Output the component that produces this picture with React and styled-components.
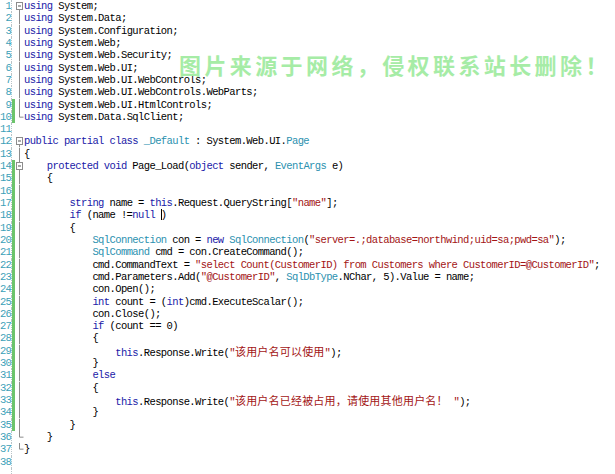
import styled, { createGlobalStyle } from "styled-components";

const GlobalStyle = createGlobalStyle`
  html, body {
    margin: 0;
    padding: 0;
    background: #ffffff;
  }
  body {
    width: 615px;
    height: 474px;
    overflow: hidden;
  }
`;

const K = "k";
const T = "t";
const S = "s";
const C = "c";
const CARET = "caret";

const ind = (n) => " ".repeat(n);

const LINES = [
  { fold: "box", code: [[K, "using"], " System;"] },
  { fold: "line", code: [[K, "using"], " System.Data;"] },
  { fold: "line", code: [[K, "using"], " System.Configuration;"] },
  { fold: "line", code: [[K, "using"], " System.Web;"] },
  { fold: "line", code: [[K, "using"], " System.Web.Security;"] },
  { fold: "line", code: [[K, "using"], " System.Web.UI;"] },
  { fold: "line", code: [[K, "using"], " System.Web.UI.WebControls;"] },
  { fold: "line", code: [[K, "using"], " System.Web.UI.WebControls.WebParts;"] },
  { fold: "line", changed: true, code: [[K, "using"], " System.Web.UI.HtmlControls;"] },
  { fold: "end", changed: true, code: [[K, "using"], " System.Data.SqlClient;"] },
  { fold: "", code: [] },
  {
    fold: "box",
    code: [[K, "public partial class"], " ", [T, "_Default"], " : System.Web.UI.", [T, "Page"]],
  },
  { fold: "line", code: ["{"] },
  {
    fold: "boxmid",
    changed: true,
    code: [ind(4), [K, "protected void"], " Page_Load(", [K, "object"], " sender, ", [T, "EventArgs"], " e)"],
  },
  { fold: "line", changed: true, code: [ind(4) + "{"] },
  { fold: "line", changed: true, code: [] },
  {
    fold: "line",
    changed: true,
    code: [ind(8), [K, "string"], " name = ", [K, "this"], ".Request.QueryString[", [S, '"name"'], "];"],
  },
  { fold: "line", changed: true, code: [ind(8), [K, "if"], " (name !=", [K, "null"], " ", [CARET, ""], ")"] },
  { fold: "line", changed: true, code: [ind(8) + "{"] },
  {
    fold: "line",
    changed: true,
    code: [
      ind(12),
      [T, "SqlConnection"],
      " con = ",
      [K, "new"],
      " ",
      [T, "SqlConnection"],
      "(",
      [S, '"server=.;database=northwind;uid=sa;pwd=sa"'],
      ");",
    ],
  },
  { fold: "line", changed: true, code: [ind(12), [T, "SqlCommand"], " cmd = con.CreateCommand();"] },
  {
    fold: "line",
    changed: true,
    code: [
      ind(12) + "cmd.CommandText = ",
      [S, '"select Count(CustomerID) from Customers where CustomerID=@CustomerID"'],
      ";",
    ],
  },
  {
    fold: "line",
    changed: true,
    code: [
      ind(12) + "cmd.Parameters.Add(",
      [S, '"@CustomerID"'],
      ", ",
      [T, "SqlDbType"],
      ".NChar, 5).Value = name;",
    ],
  },
  { fold: "line", changed: true, code: [ind(12) + "con.Open();"] },
  { fold: "line", changed: true, code: [ind(12), [K, "int"], " count = (", [K, "int"], ")cmd.ExecuteScalar();"] },
  { fold: "line", changed: true, code: [ind(12) + "con.Close();"] },
  { fold: "line", changed: true, code: [ind(12), [K, "if"], " (count == 0)"] },
  { fold: "line", changed: true, code: [ind(12) + "{"] },
  {
    fold: "line",
    changed: true,
    code: [ind(16), [K, "this"], ".Response.Write(", [S, '"'], [C, "该用户名可以使用"], [S, '"'], ");"],
  },
  { fold: "line", changed: true, code: [ind(12) + "}"] },
  { fold: "line", changed: true, code: [ind(12), [K, "else"]] },
  { fold: "line", changed: true, code: [ind(12) + "{"] },
  {
    fold: "line",
    changed: true,
    code: [
      ind(16),
      [K, "this"],
      ".Response.Write(",
      [S, '"'],
      [C, "该用户名已经被占用，请使用其他用户名！"],
      [S, ' "'],
      ");",
    ],
  },
  { fold: "line", changed: true, code: [ind(12) + "}"] },
  { fold: "line", changed: true, code: [ind(8) + "}"] },
  { fold: "end", code: [ind(4) + "}"] },
  { fold: "end", code: ["}"] },
  { fold: "", code: [] },
];

const ROW_H = 12.32;

function FoldMark({ kind }) {
  const mid = ROW_H / 2;
  return (
    <FoldSvg width="9" height={ROW_H} viewBox={`0 0 9 ${ROW_H}`}>
      {kind === "line" && <line x1="4.5" y1="0" x2="4.5" y2={ROW_H} stroke="#8c8c8c" />}
      {kind === "end" && (
        <path d={`M4.5 0 V${mid} H8.5`} fill="none" stroke="#8c8c8c" />
      )}
      {(kind === "box" || kind === "boxmid") && (
        <g>
          {kind === "boxmid" && <line x1="4.5" y1="0" x2="4.5" y2="2.5" stroke="#8c8c8c" />}
          <line x1="4.5" y1="9.5" x2="4.5" y2={ROW_H} stroke="#8c8c8c" />
          <rect x="1.5" y="2.5" width="6" height="7" fill="#ffffff" stroke="#8c8c8c" />
          <line x1="3" y1="6" x2="6" y2="6" stroke="#555" />
        </g>
      )}
    </FoldSvg>
  );
}

function CodeText({ code }) {
  return code.map((seg, i) => {
    if (typeof seg === "string") return <Plain key={i}>{seg}</Plain>;
    const [kind, text] = seg;
    if (kind === CARET) return <Caret key={i} />;
    return (
      <Tok key={i} $kind={kind}>
        {text}
      </Tok>
    );
  });
}

export default function App() {
  return (
    <>
      <GlobalStyle />
      <Editor>
        {LINES.map((ln, i) => (
          <Row key={i}>
            <LineNo>{i + 1}</LineNo>
            <Margin>
              <ChangeBar $on={!!ln.changed} />
              <FoldMark kind={ln.fold} />
            </Margin>
            <Code>
              <CodeText code={ln.code} />
            </Code>
          </Row>
        ))}
        <Filler>
          <LineNo />
        </Filler>
        <Watermark>图片来源于网络，侵权联系站长删除！</Watermark>
      </Editor>
    </>
  );
}

const Editor = styled.div`
  position: relative;
  display: flex;
  flex-direction: column;
  width: 615px;
  height: 474px;
  background: #ffffff;
  overflow: hidden;
  font-family: "Liberation Mono", "Noto Sans CJK SC", monospace;
  font-size: 10.5px;
  letter-spacing: -0.6px;
  color: #000000;
`;

const Row = styled.div`
  display: flex;
  align-items: stretch;
  height: ${ROW_H}px;
  line-height: ${ROW_H}px;
  white-space: pre;
`;

const Filler = styled.div`
  display: flex;
  flex: 1;
`;

const LineNo = styled.div`
  width: 11px;
  flex: none;
  text-align: right;
  color: #3c9fb8;
  border-right: 1px dotted #b8c4c8;
  letter-spacing: -0.8px;
`;

const Margin = styled.div`
  display: flex;
  width: 12px;
  flex: none;
`;

const ChangeBar = styled.div`
  width: 3px;
  background: ${(p) => (p.$on ? "#6cc46c" : "transparent")};
`;

const FoldSvg = styled.svg`
  display: block;
`;

const Code = styled.div`
  flex: 1;
`;

const Plain = styled.span``;

const COLORS = {
  k: "#1a1aa8",
  t: "#2b91af",
  s: "#a31515",
  c: "#a31515",
};

const Tok = styled.span`
  color: ${(p) => COLORS[p.$kind]};
  ${(p) =>
    p.$kind === C &&
    `
    font-family: "Noto Sans CJK SC", sans-serif;
    font-size: 11px;
    letter-spacing: 0.2px;
  `}
`;

const Caret = styled.span`
  display: inline-block;
  width: 1px;
  height: 11px;
  margin-right: -1px;
  background: #000000;
  vertical-align: -2px;
`;

const Watermark = styled.div`
  position: absolute;
  top: 50px;
  left: 179px;
  font-family: "Noto Sans CJK SC", sans-serif;
  font-size: 22px;
  font-weight: 700;
  letter-spacing: 3.4px;
  line-height: 28px;
  color: #a6eca6;
  white-space: nowrap;
  pointer-events: none;
`;
